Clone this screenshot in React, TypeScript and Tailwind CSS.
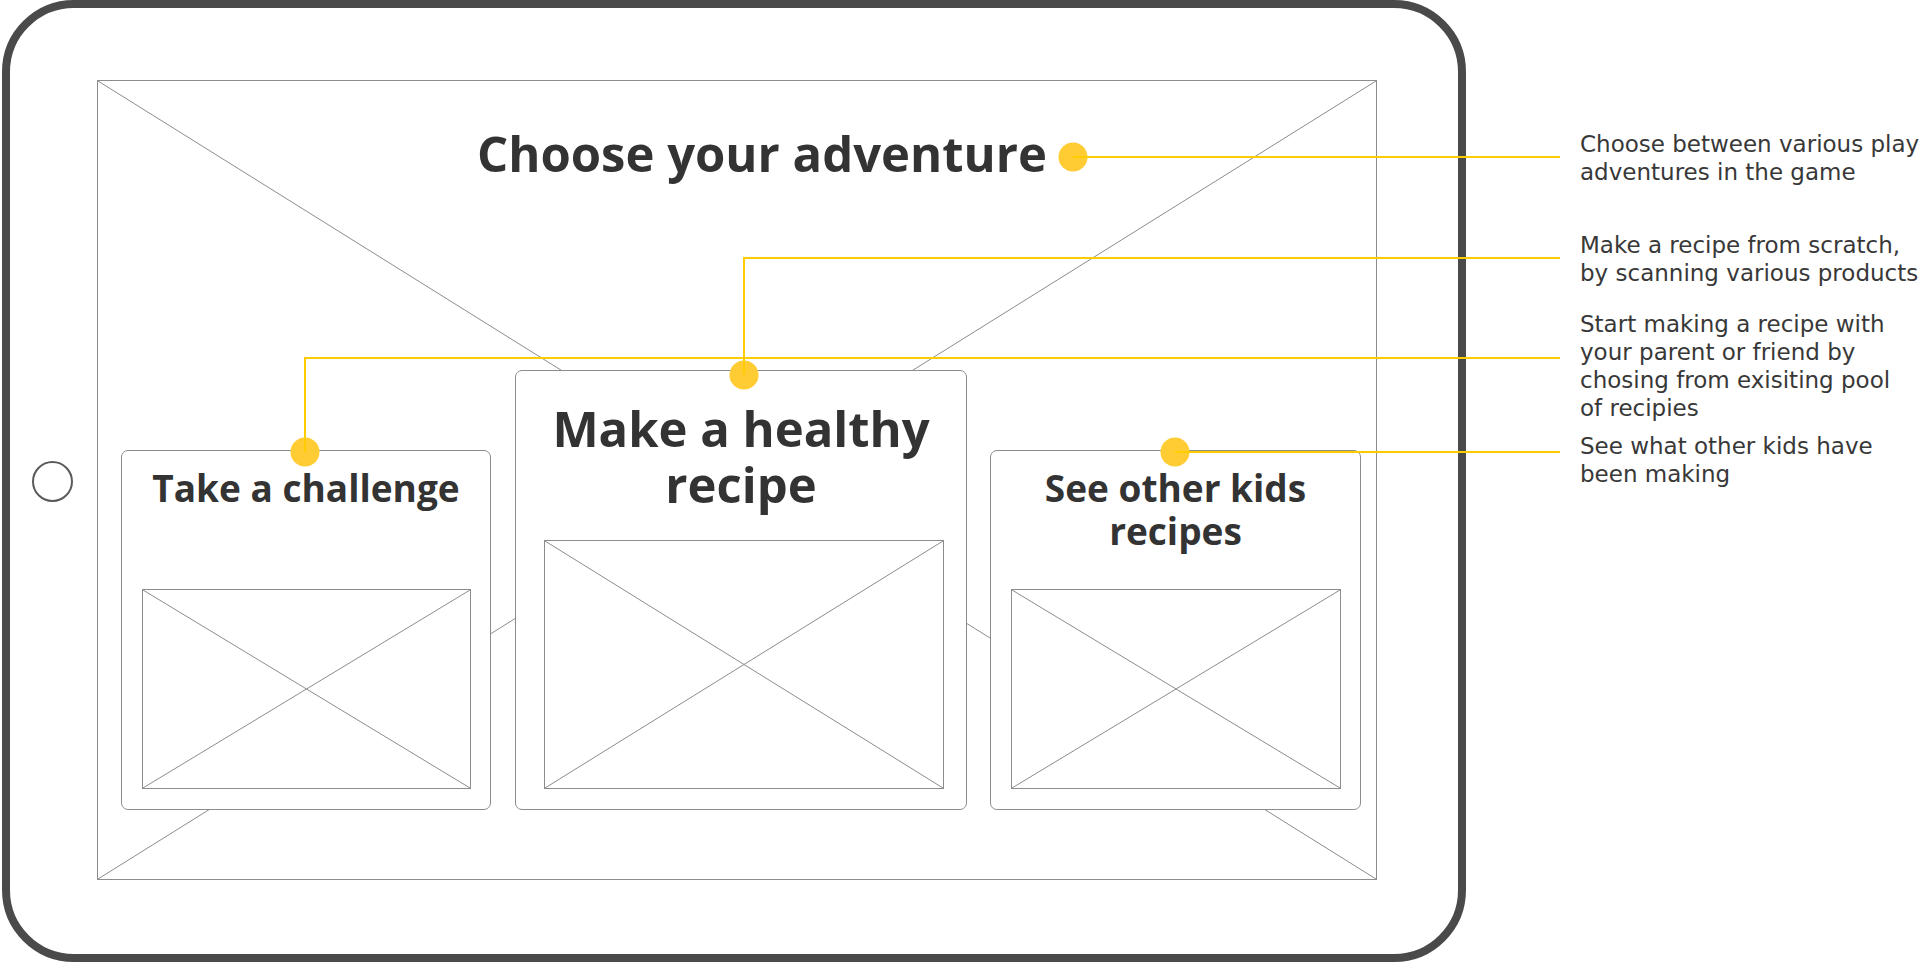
const GRAY = '#8c8c8c';

function Cross() {
  return (
    <svg
      className="absolute inset-0 h-full w-full"
      viewBox="0 0 100 100"
      preserveAspectRatio="none"
    >
      <line x1="0" y1="0" x2="100" y2="100" stroke={GRAY} strokeWidth="1" vectorEffect="non-scaling-stroke" />
      <line x1="100" y1="0" x2="0" y2="100" stroke={GRAY} strokeWidth="1" vectorEffect="non-scaling-stroke" />
    </svg>
  );
}

function Placeholder({ className }: { className: string }) {
  return (
    <div className={`relative border border-[#8c8c8c] bg-white ${className}`}>
      <Cross />
    </div>
  );
}

const notes: string[][] = [
  ['Choose between various play', 'adventures in the game'],
  ['Make a recipe from scratch,', 'by scanning various products'],
  ['Start making a recipe with', 'your parent or friend by', 'chosing from exisiting pool', 'of recipies'],
  ['See what other kids have', 'been making'],
];
const noteGaps = ['mt-0', 'mt-[45px]', 'mt-[23px]', 'mt-[10px]'];

export default function App() {
  return (
    <div className="relative flex h-[970px] w-[1930px] items-start overflow-hidden bg-white font-['Open_Sans',sans-serif] text-[#333333]">
      {/* Tablet frame */}
      <div className="ml-[2px] flex h-[962px] w-[1464px] shrink-0 items-start rounded-[72px] border-[8px] border-[#4a4a4a]">
        {/* Home button */}
        <div className="ml-[22px] mt-[453px] h-[41px] w-[41px] shrink-0 rounded-full border-2 border-[#5a5a5a]" />

        {/* Screen */}
        <div className="relative ml-[24px] mt-[72px] flex h-[800px] w-[1280px] shrink-0 flex-col border border-[#8c8c8c]">
          <Cross />

          <h1 className="relative mt-[48px] pl-[379px] text-[49px] font-bold leading-[49px] whitespace-nowrap">
            Choose your adventure
          </h1>

          <div className="relative mt-[192px] ml-[23px] flex items-end">
            <div className="flex h-[360px] w-[370px] flex-col items-center rounded-[7px] border border-[#8c8c8c] bg-white pt-[15px]">
              <h2 className="text-center text-[37px] font-bold leading-[43px]">Take a challenge</h2>
              <Placeholder className="mt-auto mb-[20px] h-[200px] w-[329px]" />
            </div>

            <div className="ml-[24px] flex h-[440px] w-[452px] flex-col rounded-[7px] border border-[#8c8c8c] bg-white pt-[29px]">
              <h2 className="text-center text-[49px] font-bold leading-[56px]">
                Make a healthy
                <br />
                recipe
              </h2>
              <Placeholder className="mt-auto mb-[20px] ml-[28px] h-[249px] w-[400px]" />
            </div>

            <div className="ml-[23px] flex h-[360px] w-[371px] flex-col items-center rounded-[7px] border border-[#8c8c8c] bg-white pt-[15px]">
              <h2 className="text-center text-[37px] font-bold leading-[43px]">
                See other kids
                <br />
                recipes
              </h2>
              <Placeholder className="mt-auto mb-[20px] h-[200px] w-[330px]" />
            </div>
          </div>
        </div>
      </div>

      {/* Annotations */}
      <div className="ml-[114px] flex flex-col pt-[130px] font-['DejaVu_Sans',sans-serif] text-[23px] leading-[28px] text-[#383838]">
        {notes.map((lines, i) => (
          <p key={i} className={`whitespace-nowrap ${noteGaps[i]}`}>
            {lines.map((l, j) => (
              <span key={j} className="block">
                {l}
              </span>
            ))}
          </p>
        ))}
      </div>

      {/* Callout lines */}
      <svg className="pointer-events-none absolute left-0 top-0" width="1930" height="970">
        <g fill="#ffcc33">
          <circle cx="1073" cy="157" r="14.5" />
          <circle cx="744" cy="375" r="14.5" />
          <circle cx="305" cy="452" r="14.5" />
          <circle cx="1175" cy="452" r="14.5" />
        </g>
        <g fill="none" stroke="#ffcc00" strokeWidth="2">
          <polyline points="1073,157 1560,157" />
          <polyline points="744,375 744,258 1560,258" />
          <polyline points="305,452 305,358 1560,358" />
          <polyline points="1175,452 1560,452" />
        </g>
      </svg>
    </div>
  );
}
